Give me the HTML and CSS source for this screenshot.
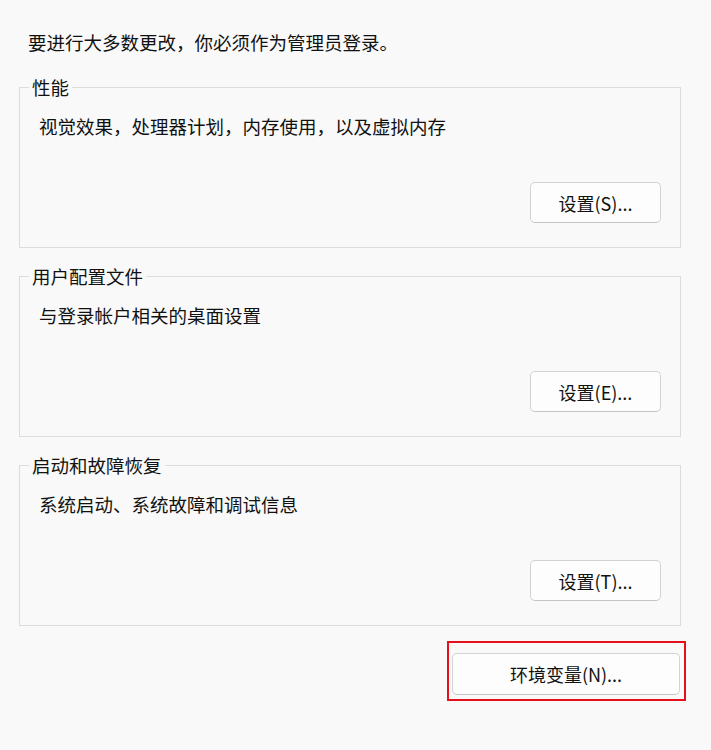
FILE: index.html
```html
<!DOCTYPE html>
<html lang="zh-CN">
<head>
    <meta charset="UTF-8">
    <meta name="viewport" content="width=device-width, initial-scale=1.0">
    <title>系统属性 - 高级</title>
    <link rel="stylesheet" href="styles.css">
</head>
<body>
    <div class="page">
        <p class="intro">要进行大多数更改，你必须作为管理员登录。</p>

        <fieldset class="group">
            <legend>性能</legend>
            <p class="desc">视觉效果，处理器计划，内存使用，以及虚拟内存</p>
            <div class="actions">
                <button class="btn">设置(S)...</button>
            </div>
        </fieldset>

        <fieldset class="group">
            <legend>用户配置文件</legend>
            <p class="desc">与登录帐户相关的桌面设置</p>
            <div class="actions">
                <button class="btn">设置(E)...</button>
            </div>
        </fieldset>

        <fieldset class="group">
            <legend>启动和故障恢复</legend>
            <p class="desc">系统启动、系统故障和调试信息</p>
            <div class="actions">
                <button class="btn">设置(T)...</button>
            </div>
        </fieldset>

        <div class="footer">
            <div class="highlight">
                <button class="btn btn-wide">环境变量(N)...</button>
            </div>
        </div>
    </div>
</body>
</html>
```

FILE: styles.css
```css
body {
    margin: 0;
    padding: 0;
    background-color: #f9f9f9;
    color: #111;
    font-family: "Noto Sans CJK SC", "Noto Sans", sans-serif;
    font-size: 18.5px;
    line-height: 24px;
}
.page {
    padding: 30px 30px 0 19px;
}
.intro {
    margin: 0 0 0 9px;
}
.group {
    margin: 22px 0 0 0;
    padding: 0 0 24px 0;
    border: 1px solid #dcdcdc;
    min-width: 0;
}
.group + .group {
    margin-top: 17px;
}
.group legend {
    margin-left: 9px;
    padding: 0 3px;
    line-height: 22px;
}
.desc {
    margin: 16px 0 0 0;
    padding-left: 19px;
}
.actions {
    display: flex;
    justify-content: flex-end;
    margin-top: 44px;
    padding-right: 19px;
}
.btn {
    width: 131px;
    height: 41px;
    background-color: #fdfdfd;
    border: 1px solid #d3d3d3;
    border-bottom-color: #c4c4c4;
    border-radius: 5px;
    font-family: inherit;
    font-size: 18px;
    color: #111;
    padding: 0;
    cursor: pointer;
}
.btn-wide {
    width: 228px;
    height: 42px;
}
.footer {
    display: flex;
    justify-content: flex-end;
    margin-top: 15px;
    margin-right: -5px;
}
.highlight {
    border: 2px solid #e6101c;
    padding: 10px 4px 4px 3px;
}
```
